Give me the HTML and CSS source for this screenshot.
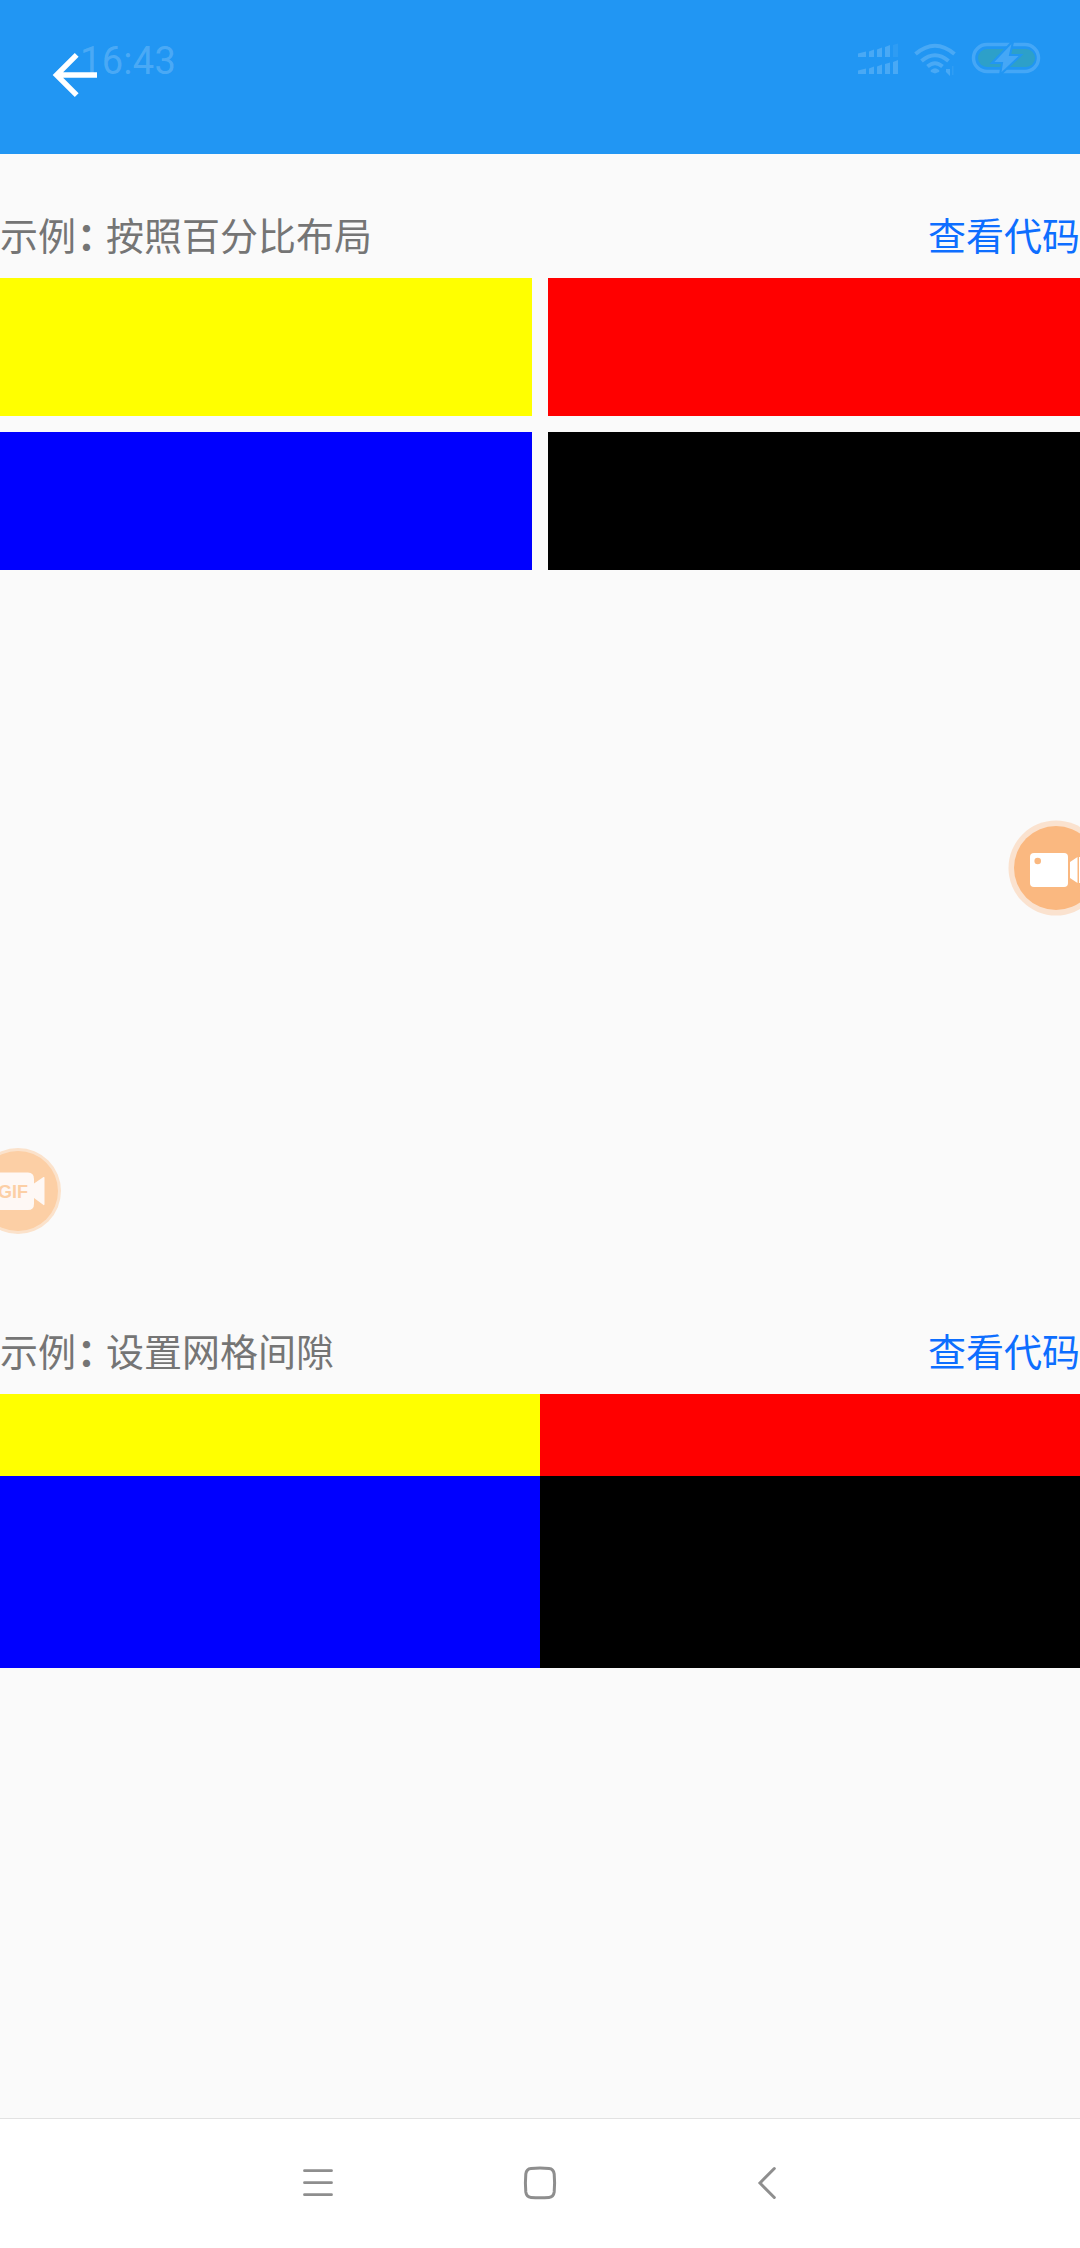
FILE: index.html
```html
<!DOCTYPE html>
<html lang="zh-CN">
<head>
<meta charset="utf-8">
<title>网格布局</title>
<link rel="stylesheet" href="styles.css">
</head>
<body>
<div class="screen">
  <header class="appbar">
    <svg class="back" viewBox="0 0 46 46"><path d="M24.700 2.800L4.500 23 24.700 43.200M4 23H45" fill="none" stroke="#fff" stroke-width="5.400"/></svg>
    <div class="statusbar">
      <span class="clock">16:43</span>
      <svg class="indicators" viewBox="0 0 184 36">
        <g fill="#fff" fill-opacity=".18">
          <path d="M0 10.500L8 8.500V14H0zM11 8.500L16 6.500V14H11zM19 6.500L24 4.500V14H19zM27 4L32 2V14H27z"/>
          <path d="M0 27.500L8 25.500V31H0zM11 25.500L16 23.500V31H11zM19 23.500L24 21.500V31H19zM27 21L32 19.500V31H27zM35 19L40 17V31H35z"/>
          <path d="M35 2L40 .5V14H35z" opacity=".35"/>
          <path d="M73 27Q77 23.500 81 27Q82 28 81 29L77 30.500L73 29Q72 28 73 27z"/>
          <path d="M88 26H92V33L87.500 28.500H88z"/>
          <path d="M94 23H95.500V32H94z" opacity=".4"/>
        </g>
        <g fill="none" stroke="#fff" stroke-opacity=".18" stroke-width="4">
          <path d="M57.500 11Q77-5.500 96.500 11M63.500 18Q77 6.500 90.500 18M69.500 23.500Q77 17 84.500 23.500"/>
        </g>
        <rect x="120" y="6" width="57" height="18" rx="9" fill="#2da0c9"/>
        <rect x="115.500" y="1.500" width="65" height="27" rx="13.500" fill="none" stroke="#45a7f6" stroke-width="3.500"/>
        <path d="M154-1L134 20H144L142 32L163 12H152L155-1z" fill="#45a7f6" stroke="#2196f3" stroke-width="2"/>
      </svg>
    </div>
  </header>
  <main class="content">
    <section class="example example-percent">
      <div class="caption"><span>示例<span class="colon">：</span>按照百分比布局</span><a class="code-link">查看代码</a></div>
      <div class="grid grid-spaced">
        <div class="yellow"></div><div class="red"></div><div class="blue"></div><div class="black"></div>
      </div>
    </section>
    <section class="example">
      <div class="caption"><span>示例<span class="colon">：</span>设置网格间隙</span><a class="code-link">查看代码</a></div>
      <div class="grid grid-joined">
        <div class="yellow"></div><div class="red"></div><div class="blue"></div><div class="black"></div>
      </div>
    </section>
  </main>
  <nav class="navbar">
    <svg viewBox="0 0 36 36"><path d="M4.500 5.700H31.500M4.500 17.700H31.500M4.500 29.700H31.500" fill="none" stroke="#8e8e8e" stroke-width="2.800" stroke-linecap="round"/></svg>
    <svg viewBox="0 0 36 36"><path d="M9 3.600Q18 2.600 27 3.600Q31.500 4 32.200 9Q33 18 32.200 27Q31.500 32 27 32.400Q18 33.200 9 32.400Q4.500 32 3.800 27Q3 18 3.800 9Q4.500 4 9 3.600z" fill="none" stroke="#8e8e8e" stroke-width="3"/></svg>
    <svg viewBox="0 0 36 36"><path d="M30.300 3.500L16 18L30.300 32.500" fill="none" stroke="#8e8e8e" stroke-width="3" stroke-linecap="round"/></svg>
  </nav>
  <svg class="float-record" viewBox="0 0 72 96">
    <circle cx="48" cy="48" r="47.500" fill="#fae2cf"/>
    <circle cx="48" cy="48" r="42" fill="#fab880"/>
    <rect x="22" y="33" width="38" height="34" rx="4" fill="#fff"/>
    <circle cx="29.700" cy="41" r="3.300" fill="#fab880"/>
    <path d="M62 42L69.500 37V63L62 58zM71 37H72V63H71z" fill="#fff"/>
  </svg>
  <svg class="float-gif" viewBox="0 0 62 88">
    <circle cx="18" cy="44" r="43" fill="#fbe2cb"/>
    <circle cx="18" cy="44" r="40" fill="#fccfa5"/>
    <path d="M0 25.500H28Q34 25.500 34 32V36.500L43.500 30Q44.500 29.500 44.500 31V57Q44.500 58.500 43.500 58L34 51V57Q34 63 28 63H0z" fill="#fef8f5"/>
    <text x="-2" y="50.500" class="gif-label">GIF</text>
  </svg>
</div>
</body>
</html>
```

FILE: styles.css
```css
* { box-sizing: border-box; }
body {
  margin: 0;
  background: #fafafa;
  font-family: "Noto Sans CJK SC", sans-serif;
}
svg { display: block; }
.screen {
  position: relative;
  display: flex;
  flex-direction: column;
  width: 1080px;
  height: 2248px;
  overflow: hidden;
}
.appbar {
  position: relative;
  flex: none;
  height: 154px;
  padding: 52px 0 0 52px;
  background: #2196f3;
}
.back { width: 46px; height: 46px; }
.statusbar {
  position: absolute;
  inset: 1px 38px auto 80px;
  display: flex;
  justify-content: space-between;
  align-items: center;
  height: 120px;
}
.clock {
  font: 38px/38px Roboto, sans-serif;
  letter-spacing: .3px;
  color: rgba(255, 255, 255, .2);
}
.indicators { width: 184px; height: 36px; overflow: visible; }
.content {
  flex: 1;
  padding-top: 42px;
}
.example-percent { height: 1116px; }
.caption {
  display: flex;
  justify-content: space-between;
  align-items: center;
  height: 82px;
  padding-bottom: 6px;
  font-size: 38px;
  line-height: 56px;
  color: #757575;
}
.colon {
  margin-left: 1px;
  font-weight: 700;
  letter-spacing: -9px;
}
.code-link { color: #0d6eff; }
.grid { display: grid; grid-template-columns: 1fr 1fr; }
.grid-spaced { grid-template-rows: 138px 138px; gap: 16px; }
.grid-joined { grid-template-rows: 82px 192px; }
.yellow { background: #ff0; }
.red { background: #f00; }
.blue { background: #00f; }
.black { background: #000; }
.navbar {
  flex: none;
  display: flex;
  justify-content: center;
  gap: 186px;
  height: 130px;
  padding-top: 46px;
  border-top: 1px solid #e2e2e2;
  background: #fff;
}
.navbar svg { width: 36px; height: 36px; }
.float-record {
  position: absolute;
  top: 820px;
  right: 0;
  width: 72px;
  height: 96px;
}
.float-gif {
  position: absolute;
  top: 1147px;
  left: 0;
  width: 62px;
  height: 88px;
}
.gif-label { font: bold 18px "Liberation Sans", sans-serif; fill: #fccfa5; }
```
